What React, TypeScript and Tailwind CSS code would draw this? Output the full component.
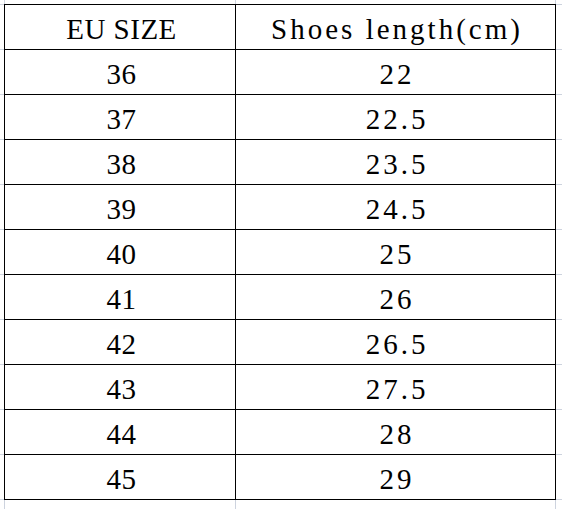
import React from 'react'

const SIZES: [string, string][] = [
  ['36', '22'],
  ['37', '22.5'],
  ['38', '23.5'],
  ['39', '24.5'],
  ['40', '25'],
  ['41', '26'],
  ['42', '26.5'],
  ['43', '27.5'],
  ['44', '28'],
  ['45', '29'],
]

function Row({ left, right }: { left: string; right: string }) {
  return (
    <div className="flex h-[45px] border-b border-black">
      <div className="flex w-[231px] items-center justify-center border-r border-black pt-[4px] pl-[3px] font-['Liberation_Serif'] text-[29px] leading-none tracking-[0.5px]">
        {left}
      </div>
      <div className="flex w-[320px] items-center justify-center border-r border-black pt-[4px] pl-[3px] font-['Liberation_Serif'] text-[29px] leading-none tracking-[3px]">
        {right}
      </div>
    </div>
  )
}

function Gutter() {
  return (
    <div className="flex flex-1 flex-col">
      <div className="h-[4px]" />
      {Array.from({ length: 11 }).map((_, i) => (
        <div key={i} className="h-[45px] border-t border-[#cdd3de]" />
      ))}
      <div className="flex-1 border-t border-[#cdd3de]" />
    </div>
  )
}

function Strip({ className }: { className: string }) {
  return (
    <div className={`flex ${className}`}>
      <div className="w-px bg-[#cdd3de]" />
      <div className="w-[230px]" />
      <div className="w-px bg-[#cdd3de]" />
      <div className="w-[319px]" />
      <div className="w-px bg-[#cdd3de]" />
    </div>
  )
}

export default function App() {
  return (
    <div className="flex h-[509px] w-[562px] bg-white font-['Liberation_Serif'] text-black">
      <div className="flex w-[4px] flex-col">
        <Gutter />
      </div>
      <div className="flex w-[552px] flex-col">
        <Strip className="h-[4px]" />
        <div className="border-l border-t border-black">
          <Row left="EU SIZE" right="Shoes length(cm)" />
          {SIZES.map(([eu, cm]) => (
            <Row key={eu} left={eu} right={cm} />
          ))}
        </div>
        <Strip className="flex-1" />
      </div>
      <div className="flex flex-1 flex-col">
        <Gutter />
      </div>
    </div>
  )
}
